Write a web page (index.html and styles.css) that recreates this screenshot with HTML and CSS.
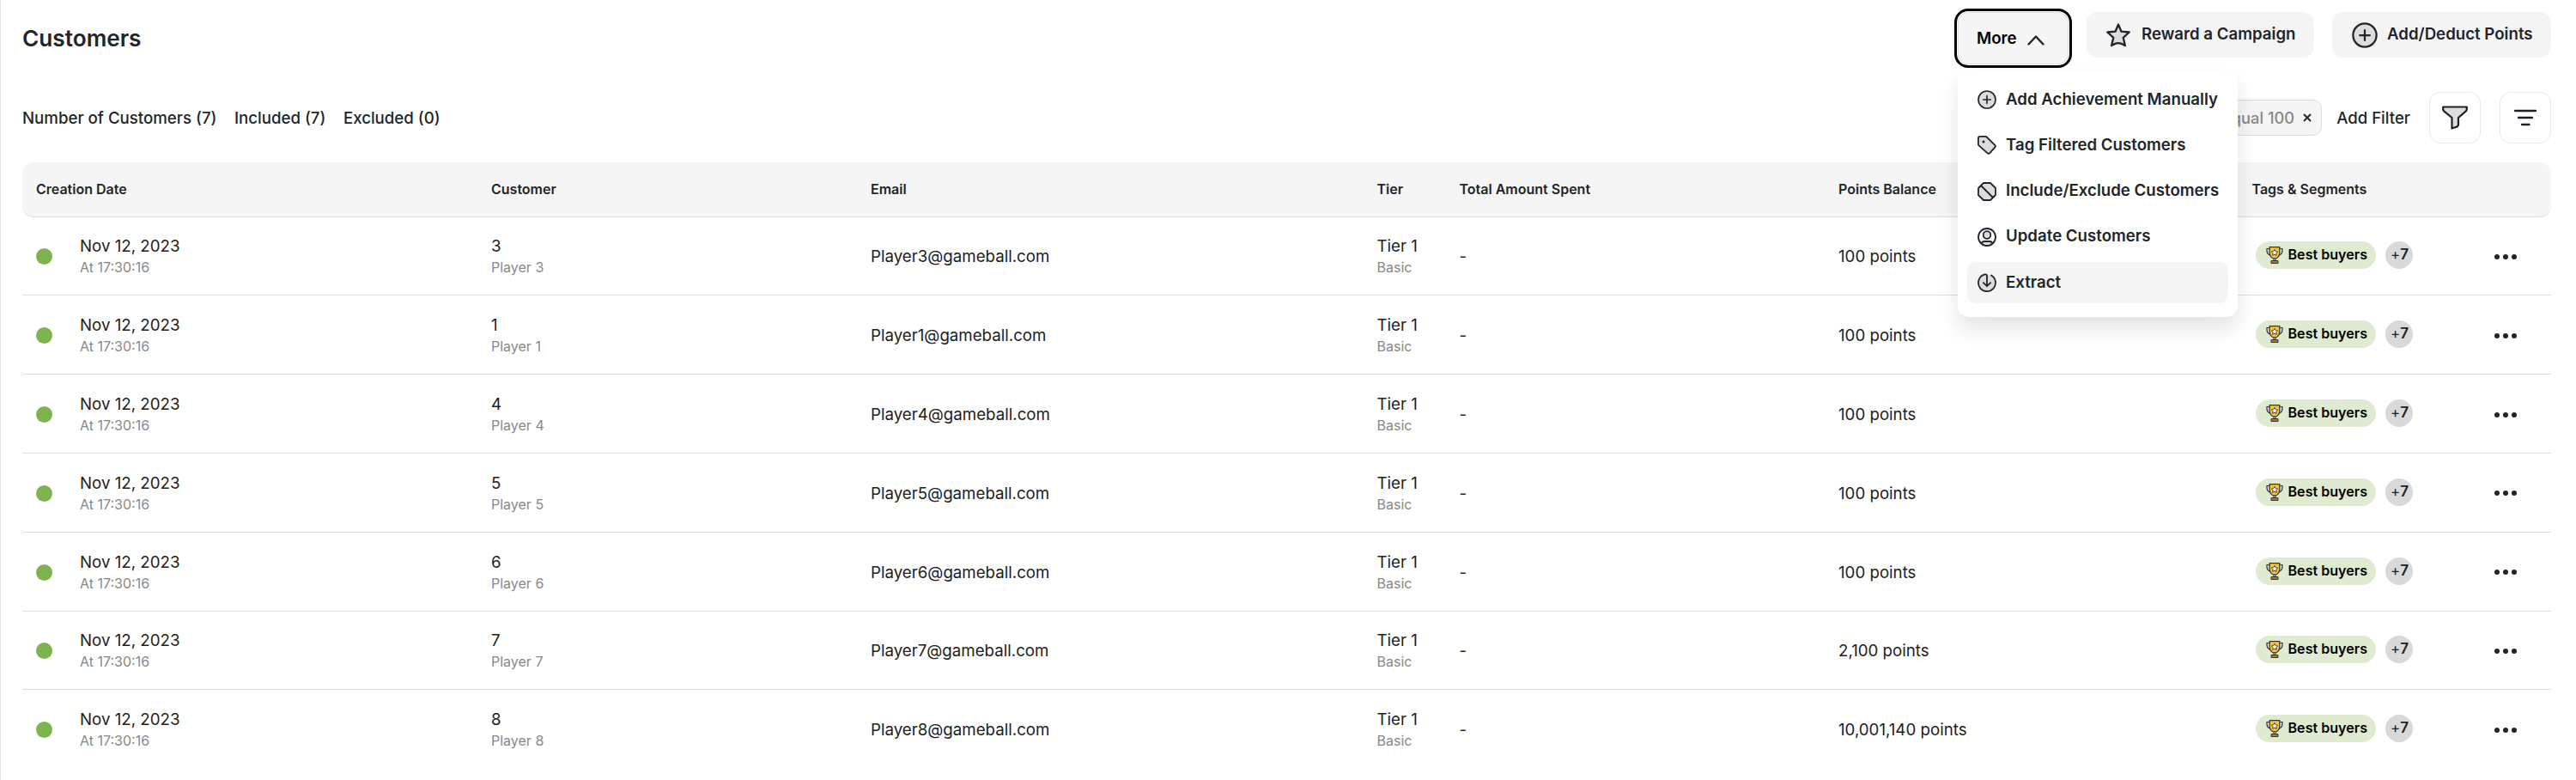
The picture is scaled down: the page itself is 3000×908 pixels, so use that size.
FILE: index.html
```html
<!DOCTYPE html>
<html lang="en">
<head>
    <meta charset="UTF-8">
    <meta name="viewport" content="width=device-width, initial-scale=1.0">
    <title>Customers</title>
    <link rel="stylesheet" href="styles.css">
</head>
<body>
    <!-- shared icons -->
    <svg class="sprite" width="0" height="0">
        <symbol id="plus-circle" viewBox="0 0 24 24">
            <circle cx="12" cy="12" r="10.9" class="ink"/>
            <path d="M12 7.3v9.4M7.3 12h9.4" class="ink"/>
        </symbol>
        <symbol id="trophy" viewBox="0 0 20 20">
            <path d="M4.5 2.5H1v2.2c0 3 1.6 4.8 4.4 5.3M15.5 2.5H19v2.2c0 3-1.6 4.8-4.4 5.3" fill="#d5dbe0" stroke="#333" stroke-width="1.2"/>
            <path d="M4.2.7h11.6v6.5c0 3.5-1.9 5.6-4.5 6.8H8.7C6.1 12.8 4.2 10.7 4.2 7.200z" fill="#fcc52f" stroke="#333" stroke-width="1.2"/>
            <path d="M10 3.3l1.2 2.3 2.5.4-1.8 1.8.4 2.6L10 9.200l-2.3 1.2.4-2.6L6.300 6l2.500-.4z" fill="#fff" stroke="#333" stroke-width=".9"/>
            <path d="M8.9 13.5h2.200v2.7H8.900z" fill="#aeb6bc" stroke="#333" stroke-width=".8"/>
            <path d="M6 16.500h8v3H6z" fill="#a87b2b" stroke="#333" stroke-width="1"/>
        </symbol>
    </svg>

    <div class="page">
        <div class="page-header">
            <h1>Customers</h1>
            <div class="actions">
                <div class="more">
                    <button class="more-btn">
                        More
                        <svg width="20" height="14" viewBox="0 0 20 14"><path d="M1.500 11.500L10 2.500l8.500 9" fill="none" stroke="#23232f" stroke-width="2.400" stroke-linecap="round" stroke-linejoin="round"/></svg>
                    </button>
                    <div class="menu">
                        <div class="menu-item">
                            <svg class="icon" width="22" height="22"><use href="#plus-circle"/></svg>
                            <span>Add Achievement Manually</span>
                        </div>
                        <div class="menu-item">
                            <svg class="icon" width="22" height="22" viewBox="0 0 22 22">
                                <path d="M3 .9h6.300c.6 0 1 .2 1.400.6l9.500 9.300c.9.900.9 2 0 2.900l-5.900 6.500c-.9.900-2 .9-2.900 0L1.600 11.300c-.5-.5-.7-1-.7-1.600V3C.9 1.800 1.800.9 3 .9z" class="ink"/>
                                <circle cx="7" cy="7" r="1.500" fill="#23232f"/>
                            </svg>
                            <span>Tag Filtered Customers</span>
                        </div>
                        <div class="menu-item">
                            <svg class="icon" width="22" height="22" viewBox="0 0 22 22">
                                <path d="M7 1h8l6 6v8l-6 6H7l-6-6V7zM4 4l14 14" class="ink"/>
                            </svg>
                            <span>Include/Exclude Customers</span>
                        </div>
                        <div class="menu-item">
                            <svg class="icon" width="22" height="22" viewBox="0 0 22 22">
                                <circle cx="11" cy="11" r="10" class="ink hollow"/>
                                <circle cx="11" cy="8.500" r="4.300" class="ink"/>
                                <path d="M4.500 18c.8-1.500 2-2 3.500-2h6c1.500 0 2.700.5 3.500 2-1.800 1.900-4 3-6.500 3s-4.700-1.100-6.500-3z" class="ink"/>
                            </svg>
                            <span>Update Customers</span>
                        </div>
                        <div class="menu-item active">
                            <svg class="icon" width="22" height="22" viewBox="0 0 22 22">
                                <circle cx="11" cy="11.500" r="9.500" fill="#dcdcdc"/>
                                <path d="M11 14.500V3c0-1.300-1.300-1.900-3.200-1.300A10 10 0 1 0 16 2.500M6.800 11.200l4.200 4 4.200-4" class="ink hollow"/>
                            </svg>
                            <span>Extract</span>
                        </div>
                    </div>
                </div>
                <button class="btn reward">
                    <svg class="icon" width="28" height="28" viewBox="0 0 28 28">
                        <path d="M14 1.500l3.500 8.200 9.200.8-7 6.300 2.200 9.300c-3-1.900-5-3-7.900-3s-4.900 1.100-7.900 3l2.200-9.300-7-6.300 9.200-.8z" class="ink bold"/>
                    </svg>
                    <span>Reward a Campaign</span>
                </button>
                <button class="btn points">
                    <svg class="icon" width="30" height="30"><use href="#plus-circle"/></svg>
                    <span>Add/Deduct Points</span>
                </button>
            </div>
        </div>

        <div class="toolbar">
            <div class="counts">
                <span>Number of Customers (7)</span>
                <span>Included (7)</span>
                <span>Excluded (0)</span>
            </div>
            <div class="filters">
                <div class="chip">
                    <span>Equal 100</span>
                    <svg width="10" height="10" viewBox="0 0 10 10"><path d="M1 1l8 8M9 1L1 9" stroke="#23232f" stroke-width="1.900"/></svg>
                </div>
                <span class="add-filter">Add Filter</span>
                <button class="square-btn">
                    <svg width="30" height="28" viewBox="0 0 30 28">
                        <path d="M1.200 1.500h27.600v2.800c0 .9-.3 1.500-1 2.100L19 14v8.500l-1.500 2-6 2V14L2.200 6.400c-.7-.6-1-1.200-1-2.100z" fill="#dcdcdc" stroke="#1e1e2a" stroke-width="2.200" stroke-linejoin="round"/>
                    </svg>
                </button>
                <button class="square-btn">
                    <svg width="28" height="20" viewBox="0 0 28 20"><path d="M2 2h24M6 10h16M10 18h8.500" stroke="#1e1e2a" stroke-width="2.300" stroke-linecap="round"/></svg>
                </button>
            </div>
        </div>

        <div class="table">
            <div class="row head">
                <div>Creation Date</div>
                <div>Customer</div>
                <div>Email</div>
                <div>Tier</div>
                <div>Total Amount Spent</div>
                <div>Points Balance</div>
                <div>Tags &amp; Segments</div>
                <div></div>
            </div>
            <div id="rows"></div>
        </div>
    </div>

    <script>
        const customers = [
            { id: 3, points: '100' },
            { id: 1, points: '100' },
            { id: 4, points: '100' },
            { id: 5, points: '100' },
            { id: 6, points: '100' },
            { id: 7, points: '2,100' },
            { id: 8, points: '10,001,140' }
        ];

        document.getElementById('rows').innerHTML = customers.map(function(c) {
            return `
            <div class="row">
                <div class="date">
                    <span class="dot"></span>
                    <div>
                        <div class="main">Nov 12, 2023</div>
                        <div class="sub">At 17:30:16</div>
                    </div>
                </div>
                <div>
                    <div class="main">${c.id}</div>
                    <div class="sub">Player ${c.id}</div>
                </div>
                <div>Player${c.id}@gameball.com</div>
                <div>
                    <div class="main">Tier 1</div>
                    <div class="sub">Basic</div>
                </div>
                <div>-</div>
                <div>${c.points} points</div>
                <div class="tags">
                    <span class="tag"><svg width="20" height="20"><use href="#trophy"/></svg><span>Best buyers</span></span>
                    <span class="count">+<b>7</b></span>
                </div>
                <div class="dots"><i></i><i></i><i></i></div>
            </div>`;
        }).join('');
    </script>
</body>
</html>
```
FILE: styles.css
```css
* {
    box-sizing: border-box;
}

body {
    margin: 0;
    font-family: Inter, sans-serif;
    font-size: 18.7px;
    color: #212529;
    background-color: #fff;
    overflow: hidden;
}

button {
    font-family: inherit;
    border: none;
    padding: 0;
    cursor: pointer;
}

svg {
    display: block;
    flex-shrink: 0;
}

.sprite {
    position: absolute;
}

.ink {
    fill: #dcdcdc;
    stroke: #23232f;
    stroke-width: 1.8;
    stroke-linecap: round;
    stroke-linejoin: round;
}

.ink.hollow {
    fill: none;
}

.ink.bold {
    stroke-width: 2.3;
}

.page {
    height: 908px;
    padding: 10px 29px 0 25px;
    border-left: 1px solid #e4e4e6;
}

.page-header {
    display: flex;
    justify-content: space-between;
    height: 69px;
}

h1 {
    margin: 0;
    font-size: 26.2px;
    font-weight: 600;
    line-height: 70px;
}

.actions {
    display: flex;
    align-items: flex-start;
}

.more {
    position: relative;
    margin-right: 17px;
}

.more-btn {
    display: flex;
    align-items: center;
    gap: 12px;
    width: 137px;
    height: 69px;
    padding: 0 0 1px 23px;
    border: 3px solid #000;
    border-radius: 16px;
    background-color: #f5f5f5;
    box-shadow: inset 0 0 0 1px #fff, inset 0 0 0 2px #dcdce8;
    color: #000;
    font-size: 18.7px;
    font-weight: 600;
}

.more-btn svg {
    margin-top: 6px;
}

/* opened under the More button */
.menu {
    position: absolute;
    top: 72px;
    left: 4px;
    z-index: 2;
    display: flex;
    flex-direction: column;
    gap: 5.3px;
    width: 326px;
    height: 287px;
    padding: 10px 11px 0;
    border-radius: 13px;
    background-color: #fff;
    box-shadow: 0 14px 24px rgba(0, 0, 0, 0.11);
}

.menu-item {
    display: flex;
    align-items: center;
    gap: 11px;
    height: 48px;
    padding-left: 12px;
    border-radius: 10px;
    font-size: 18.67px;
    font-weight: 600;
    white-space: nowrap;
}

.menu-item span {
    margin-top: -2px;
}

.menu-item.active {
    background-color: #f4f4f4;
}

.btn {
    display: flex;
    align-items: center;
    height: 53px;
    margin-top: 4px;
    padding-left: 23px;
    border-radius: 13px;
    background-color: #f4f4f4;
    color: #23232f;
    font-size: 18.67px;
    font-weight: 600;
    white-space: nowrap;
}

.btn span {
    margin-top: -2px;
}

.reward {
    gap: 13px;
    width: 265px;
    margin-right: 21px;
}

.points {
    gap: 11px;
    width: 255px;
}

.toolbar {
    display: flex;
    justify-content: space-between;
    align-items: center;
    height: 60px;
    margin-top: 28px;
    font-size: 18.67px;
    font-weight: 500;
}

.counts {
    display: flex;
    gap: 20.5px;
}

.filters {
    display: flex;
    align-items: center;
}

.chip {
    display: flex;
    align-items: center;
    gap: 10px;
    height: 42px;
    padding: 0 11px;
    border: 1px solid #dcdcdc;
    border-radius: 10px;
    background-color: #f5f5f5;
    color: #888;
    font-size: 18.3px;
}

.add-filter {
    margin: 0 22px 0 17px;
    font-size: 18.6px;
}

.square-btn {
    display: flex;
    align-items: center;
    justify-content: center;
    width: 60px;
    height: 60px;
    border: 1px solid #e8e8e8;
    border-radius: 13px;
    background-color: #fff;
}

.square-btn + .square-btn {
    margin-left: 22px;
}

.table {
    margin-top: 22px;
}

.row {
    display: grid;
    grid-template-columns: 530px 442px 589.5px 96px 441.5px 481.5px 282px 82px;
    align-items: center;
    height: 91.8px;
    padding: 2px 0 0 16px;
    border-bottom: 1px solid #dedee2;
    color: #212121;
}

#rows .row:last-child {
    border-bottom-color: transparent;
}

.row.head {
    height: 63.6px;
    padding-top: 0;
    border-radius: 13px;
    background-color: #f5f5f5;
    color: #212529;
    font-size: 16px;
    font-weight: 600;
}

.date {
    display: flex;
    align-items: center;
    gap: 32px;
}

.dot {
    width: 19px;
    height: 19px;
    border-radius: 50%;
    background-color: #7eb44e;
}

.main {
    line-height: 26px;
}

.sub {
    color: #888;
    font-size: 16px;
    line-height: 23px;
}

.tags {
    display: flex;
    gap: 11px;
    padding-left: 4px;
    margin-top: -3px;
}

.tag {
    display: flex;
    align-items: center;
    gap: 6px;
    width: 140px;
    height: 32px;
    padding-left: 12px;
    border-radius: 16px;
    background-color: #deebd1;
    color: #000;
    font-size: 16.1px;
    font-weight: 600;
}

.tag span {
    margin-top: -2px;
}

.count {
    width: 32px;
    height: 32px;
    padding-left: 2px;
    border-radius: 50%;
    background-color: #d9d9d9;
    font-size: 17px;
    line-height: 30px;
    text-align: center;
}

.count b {
    font-weight: 600;
}

.dots {
    display: flex;
    gap: 4px;
}

.dots i {
    width: 6px;
    height: 6px;
    border-radius: 50%;
    background-color: #23232f;
}
```
